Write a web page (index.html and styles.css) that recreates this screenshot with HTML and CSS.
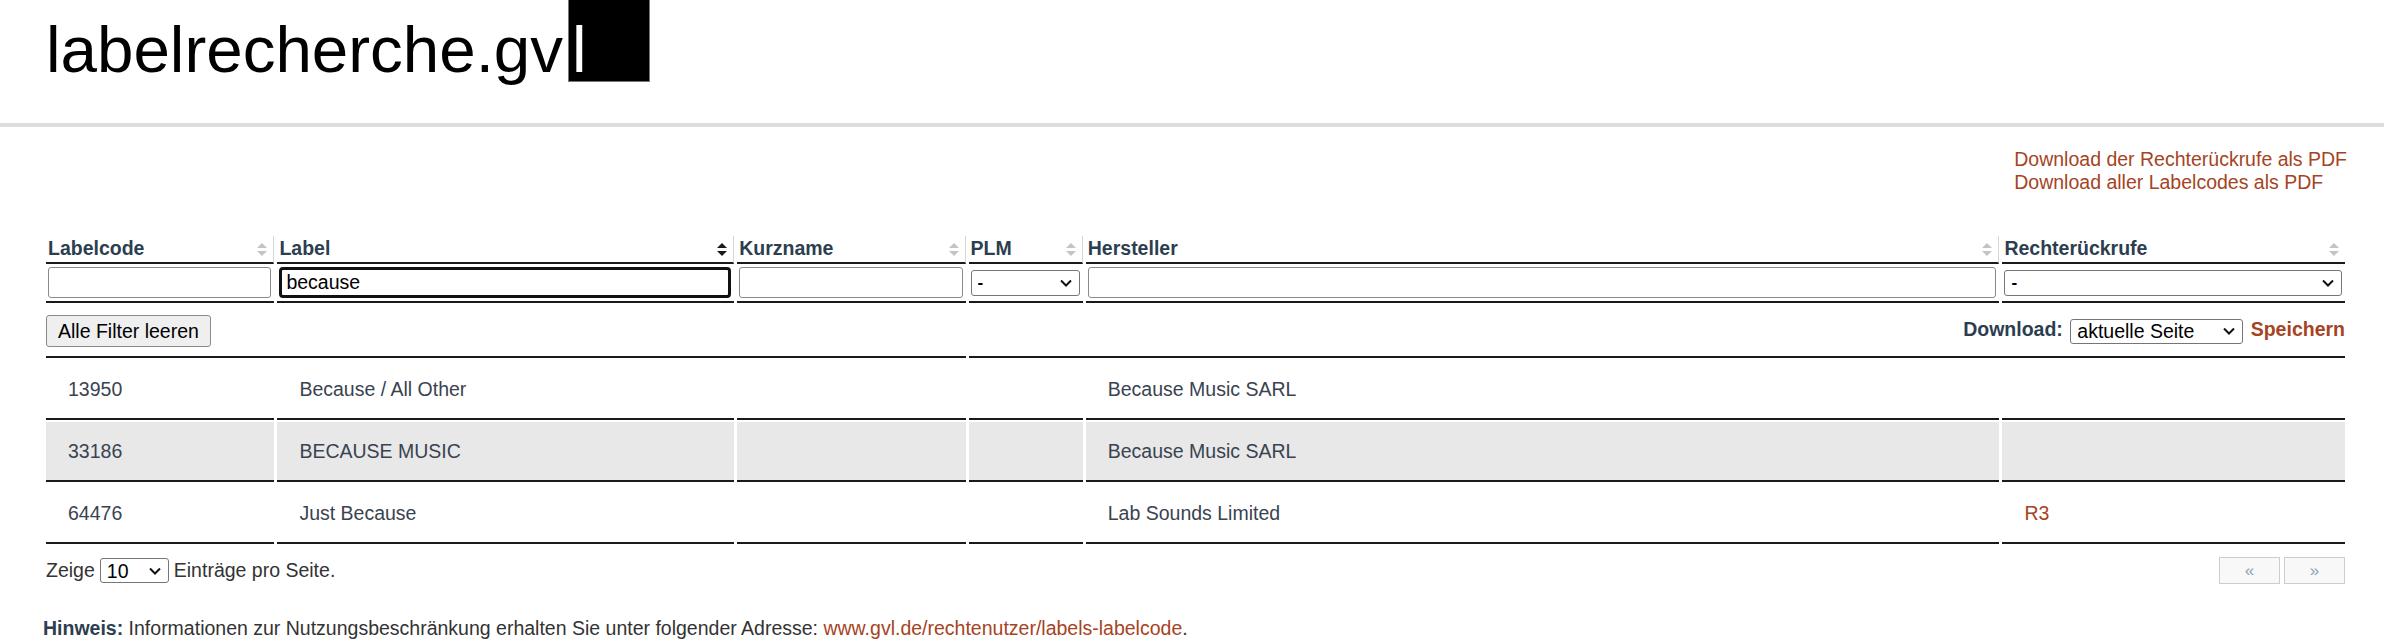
FILE: index.html
```html
<!DOCTYPE html>
<html lang="de">
<head>
<meta charset="UTF-8">
<meta name="viewport" content="width=device-width, initial-scale=1.0">
<title>labelrecherche.gvl</title>
<link rel="stylesheet" href="styles.css">
</head>
<body>
<header class="site-header">
    <h1 class="logo">labelrecherche.gv<span class="logo-cursor">l</span></h1>
</header>

<main class="page">
    <!-- PDF Downloads -->
    <div class="pdf-links">
        <div class="pdf-links-list">
            <a href="#">Download der Rechterückrufe als PDF</a><br>
            <a href="#">Download aller Labelcodes als PDF</a>
        </div>
    </div>

    <table class="label-table">
        <colgroup>
            <col class="col-code">
            <col class="col-label">
            <col class="col-short">
            <col class="col-plm">
            <col class="col-maker">
            <col class="col-recall">
        </colgroup>
        <thead>
            <tr class="head-row">
                <th><div class="th-inner">Labelcode <svg class="sort-icon" viewBox="0 0 12 15"><polygon points="1,6 6,1 11,6"/><polygon points="1,9 6,14 11,9"/></svg></div></th>
                <th><div class="th-inner">Label <svg class="sort-icon active" viewBox="0 0 12 15"><polygon points="1,6 6,1 11,6"/><polygon points="1,9 6,14 11,9"/></svg></div></th>
                <th><div class="th-inner">Kurzname <svg class="sort-icon" viewBox="0 0 12 15"><polygon points="1,6 6,1 11,6"/><polygon points="1,9 6,14 11,9"/></svg></div></th>
                <th><div class="th-inner">PLM <svg class="sort-icon" viewBox="0 0 12 15"><polygon points="1,6 6,1 11,6"/><polygon points="1,9 6,14 11,9"/></svg></div></th>
                <th><div class="th-inner">Hersteller <svg class="sort-icon" viewBox="0 0 12 15"><polygon points="1,6 6,1 11,6"/><polygon points="1,9 6,14 11,9"/></svg></div></th>
                <th><div class="th-inner">Rechterückrufe <svg class="sort-icon" viewBox="0 0 12 15"><polygon points="1,6 6,1 11,6"/><polygon points="1,9 6,14 11,9"/></svg></div></th>
            </tr>
            <tr class="filter-row">
                <td><input type="text" class="filter-input"></td>
                <td><input type="text" class="filter-input is-focused" value="because"></td>
                <td><input type="text" class="filter-input"></td>
                <td>
                    <span class="select-wrap block">
                        <select class="filter-select"><option>-</option></select>
                        <svg class="chevron" viewBox="0 0 12 8"><polyline points="1,1.5 6,6.5 11,1.5"/></svg>
                    </span>
                </td>
                <td><input type="text" class="filter-input"></td>
                <td>
                    <span class="select-wrap block">
                        <select class="filter-select"><option>-</option></select>
                        <svg class="chevron" viewBox="0 0 12 8"><polyline points="1,1.5 6,6.5 11,1.5"/></svg>
                    </span>
                </td>
            </tr>
            <tr class="tool-row">
                <td colspan="3"><button class="btn-reset">Alle Filter leeren</button></td>
                <td colspan="3" class="export">
                    <b>Download:</b>
                    <span class="select-wrap">
                        <select class="export-select"><option>aktuelle Seite</option></select>
                        <svg class="chevron" viewBox="0 0 12 8"><polyline points="1,1.5 6,6.5 11,1.5"/></svg>
                    </span>
                    <a href="#" class="save-link">Speichern</a>
                </td>
            </tr>
        </thead>
        <tbody>
            <tr>
                <td>13950</td>
                <td>Because / All Other</td>
                <td></td>
                <td></td>
                <td>Because Music SARL</td>
                <td></td>
            </tr>
            <tr class="row-alt">
                <td>33186</td>
                <td>BECAUSE MUSIC</td>
                <td></td>
                <td></td>
                <td>Because Music SARL</td>
                <td></td>
            </tr>
            <tr>
                <td>64476</td>
                <td>Just Because</td>
                <td></td>
                <td></td>
                <td>Lab Sounds Limited</td>
                <td><a href="#">R3</a></td>
            </tr>
        </tbody>
    </table>

    <div class="table-footer">
        <div class="page-size">
            Zeige
            <span class="select-wrap">
                <select class="size-select"><option>10</option></select>
                <svg class="chevron" viewBox="0 0 12 8"><polyline points="1,1.5 6,6.5 11,1.5"/></svg>
            </span>
            Einträge pro Seite.
        </div>
        <div class="pager">
            <button class="pager-btn">«</button>
            <button class="pager-btn">»</button>
        </div>
    </div>

    <p class="note">
        <b>Hinweis:</b> Informationen zur Nutzungsbeschränkung erhalten Sie unter folgender Adresse: <a href="#">www.gvl.de/rechtenutzer/labels-labelcode</a>.
    </p>
</main>
</body>
</html>
```

FILE: styles.css
```css
body {
    margin: 0;
    font-family: "Liberation Sans", Arial, sans-serif;
    font-size: 19.5px;
    color: #333;
    background: #fff;
}

a {
    color: #a5441f;
    text-decoration: none;
}

/* Kopfbereich */
.site-header {
    height: 123px;
    border-bottom: 4px solid #ddd;
    padding-left: 46px;
}

.logo {
    margin: 0;
    font-size: 65.5px;
    font-weight: normal;
    line-height: 99px;
    color: #000;
    white-space: nowrap;
}

.logo-cursor {
    display: inline-block;
    vertical-align: top;
    box-sizing: border-box;
    width: 82px;
    height: 82px;
    margin-left: 5px;
    padding-left: 3px;
    background: #000;
    color: #fff;
    border: 1px solid #777;
    border-top: none;
}

.page {
    padding: 0 39px 0 46px;
}

.pdf-links {
    display: flex;
    justify-content: flex-end;
    padding-top: 21px;
    margin-right: -2px;
}

.pdf-links-list {
    line-height: 22.5px;
}

/* Tabelle */
.label-table {
    width: calc(100% + 6px);
    margin: 41px -3px 0;
    table-layout: fixed;
    border-collapse: separate;
    border-spacing: 3px 2px;
}

.col-code { width: 10%; }
.col-label { width: 20%; }
.col-short { width: 10%; }
.col-plm { width: 5%; }
.col-maker { width: 40%; }
.col-recall { width: 15%; }

.head-row th {
    padding: 1px 5px 3px 2px;
    text-align: left;
    font-weight: bold;
    color: #2c3e50;
    line-height: 22px;
    border-bottom: 2px solid #1a1a1a;
    border-right: 1px solid #d6d6d6;
}

.head-row th:last-child {
    border-right: none;
}

.th-inner {
    display: flex;
    justify-content: space-between;
    align-items: center;
}

.sort-icon {
    width: 12px;
    height: 15px;
    margin-top: 3px;
    fill: #c4c4c4;
    flex-shrink: 0;
}

.sort-icon.active {
    fill: #1a1a1a;
}

.filter-row td {
    padding: 1px 3px 3px 2px;
    border-bottom: 2px solid #1a1a1a;
    vertical-align: middle;
}

.filter-input {
    display: block;
    box-sizing: border-box;
    width: 100%;
    height: 31px;
    padding: 0 6px;
    font-family: inherit;
    font-size: 19.5px;
    color: #000;
    border: 1px solid #8a8a8a;
    border-radius: 3px;
    background: #fff;
}

.filter-input.is-focused {
    border: 3px solid #111;
    border-radius: 4px;
    padding: 0 4px;
    outline: none;
}

/* Auswahllisten mit eigenem Pfeil */
.select-wrap {
    position: relative;
    display: inline-block;
    vertical-align: middle;
}

.select-wrap.block {
    display: block;
}

.chevron {
    position: absolute;
    right: 8px;
    top: 50%;
    width: 12px;
    height: 8px;
    margin-top: -4px;
    fill: none;
    stroke: #111;
    stroke-width: 2;
    pointer-events: none;
}

.filter-select,
.export-select,
.size-select {
    -webkit-appearance: none;
    appearance: none;
    box-sizing: border-box;
    display: block;
    padding: 0 24px 0 6px;
    font-family: inherit;
    color: #000;
    background: #fff;
    border: 1px solid #767676;
    border-radius: 3px;
}

.filter-select {
    width: 100%;
    height: 26px;
    font-size: 17px;
    font-weight: bold;
}

.tool-row td {
    padding: 10px 0 9px;
    border-bottom: 2px solid #1a1a1a;
    vertical-align: middle;
}

.btn-reset {
    height: 32px;
    padding: 0 11px;
    font-family: inherit;
    font-size: 19.5px;
    color: #000;
    background: #efefef;
    border: 1px solid #8a8a8a;
    border-radius: 3px;
}

.export {
    text-align: right;
    color: #2c3e50;
}

.export .select-wrap {
    margin: 0 2px;
    text-align: left;
}

.export-select {
    width: 173px;
    height: 25px;
    font-size: 19.5px;
}

.save-link {
    font-weight: bold;
}

tbody td {
    padding: 18px 22px;
    line-height: 22px;
    border-bottom: 2px solid #1a1a1a;
    color: #3a4350;
    white-space: nowrap;
}

.row-alt td {
    background: #e8e8e8;
}

/* Fußbereich der Tabelle */
.table-footer {
    display: flex;
    justify-content: space-between;
    align-items: center;
    height: 27px;
    margin-top: 11px;
}

.page-size {
    display: flex;
    align-items: center;
    gap: 5px;
    color: #333;
}

.size-select {
    width: 69px;
    height: 25px;
    font-size: 19.5px;
}

.pager {
    display: flex;
    gap: 4px;
}

.pager-btn {
    width: 61px;
    height: 27px;
    padding: 0;
    font-family: inherit;
    font-size: 17px;
    color: #8ea2b8;
    background: #f8f8f8;
    border: 1px solid #cdcdcd;
}

.note {
    margin: 33px 0 0 -3px;
    line-height: 22px;
    color: #333;
}

.note b {
    color: #2c3e50;
}
```
